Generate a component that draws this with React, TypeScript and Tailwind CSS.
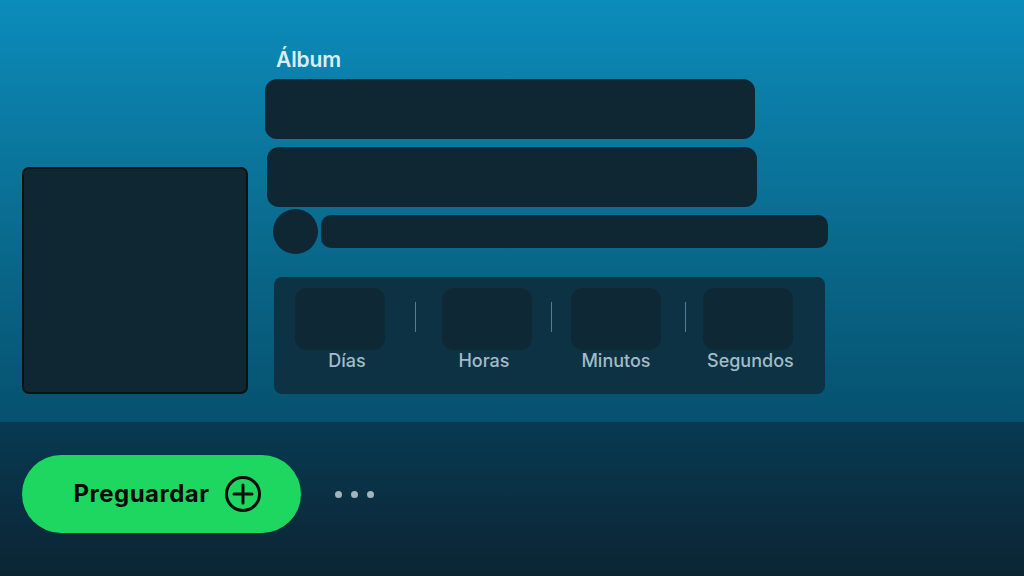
import React from "react";

const font = { fontFamily: "Inter, 'Noto Sans', 'Liberation Sans', sans-serif" };

function Unit({ label, className, labelClass }: { label: string; className?: string; labelClass?: string }) {
  return (
    <div className={"flex flex-col items-center " + (className ?? "")}>
      <div className="w-[90px] h-[62px] rounded-[12px] bg-[#0f2835]" />
      <div className={"mt-[0px] text-[18px] leading-[22px] text-[#a3bcc7] font-medium " + (labelClass ?? "")}>{label}</div>
    </div>
  );
}

function Sep({ className }: { className?: string }) {
  return <div className={"w-px h-[30px] mt-[14px] bg-[#4d8196] " + (className ?? "")} />;
}

export default function App() {
  return (
    <div className="w-[1024px] h-[576px] overflow-hidden flex flex-col" style={font}>
      <div className="h-[422px] shrink-0 flex items-end px-[22px] pb-[28px] bg-gradient-to-b from-[#0b8cbb] via-[#0a6e92] to-[#06516f]">
        <div className="w-[226px] h-[227px] shrink-0 rounded-[7px] border-2 border-[#07130e] bg-[#0f2633]" />
        <div className="ml-[17px] flex flex-col items-start">
          <div className="ml-[11px] text-[21px] leading-[26px] font-semibold text-[#d9eef5] tracking-[-0.1px]">Álbum</div>
          <div className="mt-[6px] w-[490px] h-[60px] rounded-[12px] bg-[#0f2633]" />
          <div className="mt-[8px] ml-[2px] w-[490px] h-[60px] rounded-[12px] bg-[#0f2633]" />
          <div className="mt-[2px] ml-[8px] flex items-center">
            <div className="w-[45px] h-[45px] rounded-full bg-[#0f2633]" />
            <div className="ml-[3px] w-[507px] h-[33px] rounded-[10px] bg-[#0f2633]" />
          </div>
          <div className="mt-[23px] ml-[9px] w-[551px] h-[117px] rounded-[8px] bg-[#0c3243] flex items-start pt-[11px] pl-[21px]">
            <Unit label="Días" labelClass="pl-[14px]" />
            <Sep className="ml-[30px]" />
            <Unit label="Horas" className="ml-[26px]" labelClass="pr-[6px]" />
            <Sep className="ml-[19px]" />
            <Unit label="Minutos" className="ml-[19px]" />
            <Sep className="ml-[24px]" />
            <Unit label="Segundos" className="ml-[17px]" labelClass="pl-[4px]" />
          </div>
        </div>
      </div>
      <div className="flex-1 bg-gradient-to-b from-[#073a52] to-[#0b2534] px-[22px] pt-[33px]">
        <div className="flex items-center">
          <button className="w-[279px] h-[78px] rounded-full bg-[#1ed760] flex items-center justify-center gap-[14px] pl-[12px]">
            <span className="text-[24px] font-bold text-[#0a0a0a] tracking-[0.5px]">Preguardar</span>
            <svg width="38" height="38" viewBox="0 0 38 38" fill="none" stroke="#0a0a0a" strokeWidth="3" strokeLinecap="round">
              <circle cx="19" cy="19" r="16.5" />
              <line x1="19" y1="10" x2="19" y2="28" />
              <line x1="10" y1="19" x2="28" y2="19" />
            </svg>
          </button>
          <div className="ml-[34px] flex items-center gap-[9px]">
            <span className="w-[7px] h-[7px] rounded-full bg-[#9fb5c1]" />
            <span className="w-[7px] h-[7px] rounded-full bg-[#9fb5c1]" />
            <span className="w-[7px] h-[7px] rounded-full bg-[#9fb5c1]" />
          </div>
        </div>
      </div>
    </div>
  );
}
